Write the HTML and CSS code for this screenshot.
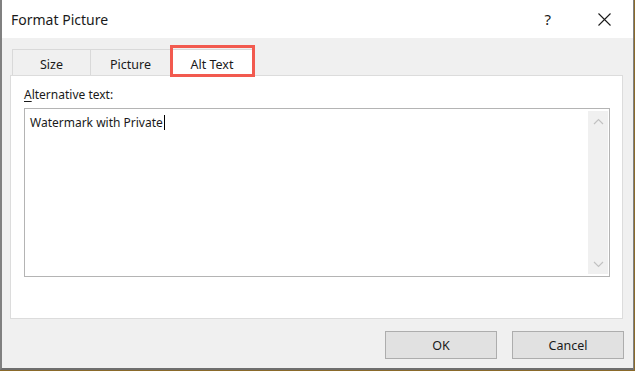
FILE: index.html
```html
<!DOCTYPE html>
<html>
<head>
<meta charset="utf-8">
<link rel="stylesheet" href="styles.css">
</head>
<body>
<div class="window">
  <div class="titlebar">
    <div class="title">Format Picture</div>
    <div class="title-buttons">
      <span class="help">?</span>
      <svg class="close" width="13" height="13" viewBox="0 0 13 13"><path d="M0.5 0.5 L12.5 12.5 M12.5 0.5 L0.5 12.5" stroke="#1a1a1a" stroke-width="1.1" fill="none"/></svg>
    </div>
  </div>
  <div class="client">
    <div class="tabs">
      <div class="tab">Size</div>
      <div class="tab">Picture</div>
      <div class="tab tab-active">Alt Text<span class="highlight"></span></div>
    </div>
    <div class="panel">
      <div class="label"><u>A</u>lternative text:</div>
      <div class="textbox">
        <div class="text">Watermark with Private<span class="caret"></span></div>
        <div class="scrollbar">
          <svg width="11" height="7" viewBox="0 0 11 7"><path d="M1 6 L5.5 1.5 L10 6" stroke="#c2c2c2" stroke-width="1.2" fill="none"/></svg>
          <svg width="11" height="7" viewBox="0 0 11 7"><path d="M1 1 L5.5 5.5 L10 1" stroke="#c2c2c2" stroke-width="1.2" fill="none"/></svg>
        </div>
      </div>
    </div>
    <div class="buttons">
      <button class="btn">OK</button>
      <button class="btn">Cancel</button>
    </div>
  </div>
</div>
</body>
</html>
```
FILE: styles.css
```css
html, body {
  margin: 0;
  padding: 0;
  background: #8a6a2a;
}
body {
  width: 635px;
  height: 371px;
  overflow: hidden;
  font-family: "Noto Sans", "Open Sans", sans-serif;
  color: #1a1a1a;
}
.window {
  width: 634px;
  height: 370px;
  box-sizing: border-box;
  border-left: 2px solid #808080;
  border-right: 1px solid #808080;
  border-bottom: 2px solid #6e6e6e;
  background: #f0f0f0;
  display: flex;
  flex-direction: column;
}
.titlebar {
  height: 38px;
  background: #ffffff;
  display: flex;
  align-items: center;
  justify-content: space-between;
  padding-left: 9px;
  flex: none;
}
.title {
  font-size: 14px;
  color: #1a1a1a;
  margin-top: 1px;
}
.title-buttons {
  display: flex;
  align-items: center;
  gap: 47px;
  margin-right: 22px;
}
.help {
  font-size: 15px;
  color: #1a1a1a;
}
.client {
  flex: 1;
  display: flex;
  flex-direction: column;
  padding: 11px 9px 0 8px;
}
.tabs {
  display: flex;
  padding-left: 2px;
  height: 26px;
  flex: none;
}
.tab {
  box-sizing: border-box;
  height: 26px;
  border-top: 1px solid #d9d9d9;
  border-left: 1px solid #d9d9d9;
  font-size: 12.5px;
  display: flex;
  align-items: center;
  justify-content: center;
  padding-top: 3px;
  color: #1a1a1a;
}
.tab:nth-child(1) { width: 78px; }
.tab:nth-child(2) { width: 80px; }
.tab-active {
  width: 84px;
  background: #ffffff;
  position: relative;
  border-right: 1px solid #d9d9d9;
}
.highlight {
  position: absolute;
  left: -1px;
  top: -5px;
  width: 85px;
  height: 32px;
  box-sizing: border-box;
  border: 3px solid #f25a4f;
}
.panel {
  box-sizing: border-box;
  height: 244px;
  margin-right: 1px;
  background: #ffffff;
  border: 1px solid #dcdcdc;
  padding: 10px 12px 0 13px;
  flex: none;
}
.label {
  font-size: 12px;
  line-height: 18px;
  margin-bottom: 4px;
}
.label u {
  text-decoration-thickness: 1px;
  text-underline-offset: 2px;
}
.textbox {
  box-sizing: border-box;
  height: 169px;
  border: 1px solid #b4b4b4;
  background: #ffffff;
  display: flex;
  padding: 2px 1px 2px 5px;
}
.text {
  flex: 1;
  font-size: 12px;
  line-height: 18px;
  padding-top: 3px;
}
.caret {
  display: inline-block;
  width: 1px;
  height: 15px;
  background: #000;
  vertical-align: -3px;
  margin-left: 1px;
}
.scrollbar {
  width: 20px;
  background: #f0f0f0;
  display: flex;
  flex-direction: column;
  align-items: center;
  justify-content: space-between;
  padding: 7px 0 6px;
}
.buttons {
  display: flex;
  justify-content: flex-end;
  gap: 15px;
  margin-top: 12px;
}
.btn {
  width: 112px;
  height: 28px;
  box-sizing: border-box;
  background: #e1e1e1;
  border: 1px solid #adadad;
  font-family: "Noto Sans", "Open Sans", sans-serif;
  font-size: 12.5px;
  color: #1a1a1a;
  padding: 0;
}
```
